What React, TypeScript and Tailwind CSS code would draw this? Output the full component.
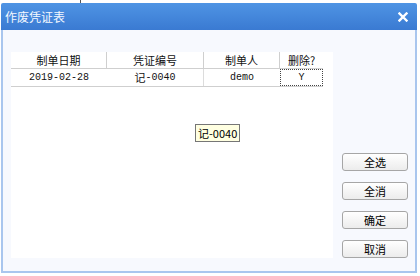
import React from 'react';

const cjk = { fontFamily: '"Noto Sans CJK SC", "Noto Sans", sans-serif' };
const mono = { fontFamily: '"Liberation Mono", "Noto Sans CJK SC", monospace' };

function DialogButton({ label }: { label: string }) {
    return (
        <button className="w-[66px] h-[18px] rounded-[3px] border border-[#a6a6a6] bg-gradient-to-b from-white to-[#ececec] text-[11px] leading-none text-black flex items-center justify-center">
            {label}
        </button>
    );
}

export default function App() {
    const buttons = ['全选', '全消', '确定', '取消'];

    return (
        <div className="w-[420px] h-[276px] bg-white overflow-hidden" style={cjk}>
            {/* strip above the dialog */}
            <div className="h-[3px] flex">
                <div className="ml-[80px] w-px bg-[#555]" />
            </div>

            <div className="ml-[1px] w-[416px] h-[270px] flex flex-col">
                {/* title bar */}
                <div className="h-[27px] rounded-t-[2px] bg-gradient-to-b from-[#4f94e4] to-[#3a7ad2] flex items-center justify-between pl-[4px] pr-[9px]">
                    <span className="text-[#f4f8ff] text-[12px] leading-none">作废凭证表</span>
                    <svg width="10" height="10" viewBox="0 0 10 10">
                        <path d="M1.5 1.5 L8.5 8.5 M8.5 1.5 L1.5 8.5" stroke="#fff" strokeWidth="2.4" strokeLinecap="square" />
                    </svg>
                </div>

                {/* body */}
                <div className="flex-1 flex border-x-2 border-b-2 border-[#a9c6ee] bg-[#f7f9fe] pl-[8px]">
                    <div className="relative mt-[22px] w-[322px] h-[206px] bg-white">
                        {/* header */}
                        <div className="flex h-[17px] w-[312px] border-b border-[#cfcfcf] text-[11px] leading-none text-[#111]">
                            <div className="w-[96px] flex items-center justify-center border-r border-[#cfcfcf]">制单日期</div>
                            <div className="w-[97px] flex items-center justify-center border-r border-[#cfcfcf]">凭证编号</div>
                            <div className="w-[76px] flex items-center justify-center border-r border-[#cfcfcf]">制单人</div>
                            <div className="w-[43px] flex items-center justify-center">删除?</div>
                        </div>
                        {/* data row */}
                        <div className="flex h-[18px] w-[312px] border-b border-[#cfcfcf] text-[10px] leading-none text-[#111]" style={mono}>
                            <div className="w-[96px] flex items-center justify-center">2019-02-28</div>
                            <div className="w-[97px] flex items-center justify-center border-r border-[#dcdcdc]">
                                <span style={cjk} className="text-[11px]">记</span>-0040
                            </div>
                            <div className="w-[76px] flex items-center justify-center">demo</div>
                            <div className="w-[43px] flex items-center justify-center border border-dotted border-[#444]">Y</div>
                        </div>

                        {/* tooltip */}
                        <div className="absolute left-[184px] top-[72px] h-[18px] px-[2px] border border-[#767676] bg-[#ffffe1] text-[11px] leading-none text-black flex items-center">
                            记-0040
                        </div>
                    </div>

                    <div className="ml-[9px] pt-[123px] flex flex-col gap-[11px]">
                        {buttons.map((b) => (
                            <DialogButton key={b} label={b} />
                        ))}
                    </div>
                </div>
            </div>
        </div>
    );
}
